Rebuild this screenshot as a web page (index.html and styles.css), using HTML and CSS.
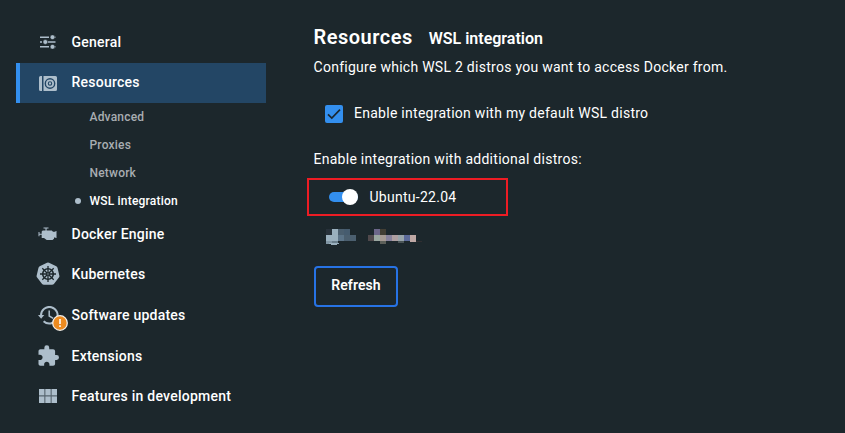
FILE: index.html
```html
<!DOCTYPE html>
<html lang="en">
<head>
<meta charset="utf-8">
<title>Settings</title>
<link rel="stylesheet" href="styles.css">
</head>
<body>
<div class="app">
  <nav class="sidebar">
    <a class="item first"><span class="icon"><svg width="16" height="14" viewBox="0 0 16 14"><g stroke="#adbecb" stroke-width="1.5"><path d="M0 2.2h9M11 2.2h4.5M0 7h2M4 7h11.5M0 11.8h9M11 11.8h4.5"/></g><g fill="#adbecb" stroke="#1c272c" stroke-width=".6"><circle cx="12.5" cy="2.2" r="2.4"/><circle cx="5.3" cy="7" r="2.4"/><circle cx="12.5" cy="11.8" r="2.4"/></g></svg></span><span class="label">General</span></a>
    <a class="item active"><span class="icon"><svg width="18" height="15" viewBox="0 0 18 15"><path fill="#adbecb" d="M1.500 0H3v15H1.500Q0 15 0 13.500v-12Q0 0 1.500 0zM4.500 0h12Q18 0 18 1.500v12q0 1.500-1.500 1.500h-12z"/><circle cx="11" cy="7.500" r="4.700" fill="none" stroke="#234665" stroke-width="1.400"/><circle cx="11" cy="7.500" r="1.700" fill="none" stroke="#234665" stroke-width="1.100"/></svg></span><span class="label">Resources</span></a>
    <div class="subnav">
      <a class="sub">Advanced</a>
      <a class="sub">Proxies</a>
      <a class="sub">Network</a>
      <a class="sub current">WSL integration</a>
    </div>
    <a class="item engine"><span class="icon"><svg width="20" height="16" viewBox="0 0 20 16"><path fill="#adbecb" d="M5.500 1.500h5v1.100H8.600v2h5.200l1.200 1.200h2.500V5h1v7h-1v-.6H16v1.400L14.500 14H8.700L6 12H3.700V8.700H1.500v1.600h-1V6h1v1.700h2.200V5.400l1-.8h2.800v-2h-2z"/></svg></span><span class="label">Docker Engine</span></a>
    <a class="item"><span class="icon"><svg width="24" height="24" viewBox="0 0 24 24"><path fill="#adbecb" d="M11 .8q1-.5 2 0l7.300 3.500q.9.500 1.200 1.500l1.900 7.900q.2 1-.5 1.900l-5 6.400q-.7.800-1.800.8H7.900q-1.100 0-1.800-.8l-5-6.400q-.7-.9-.5-1.900l1.900-7.900q.3-1 1.200-1.500z"/><g fill="none" stroke="#1c272c" stroke-width="1.600"><circle cx="12" cy="12" r="5.300"/><path d="M12 4v16M4 12h16M6.300 6.300l11.400 11.400M17.700 6.300 6.300 17.700" stroke-width="1.300"/></g><circle cx="12" cy="12" r="1.200" fill="#adbecb" stroke="#1c272c"/></svg></span><span class="label">Kubernetes</span></a>
    <a class="item updates"><span class="icon update"><svg width="21" height="19" viewBox="0 0 21 19"><path fill="none" stroke="#adbecb" stroke-width="2" d="M3 10.500V9.300a8.300 8.300 0 1 1 2.600 6"/><path fill="#adbecb" d="M0 9h6.300L3.100 12.800z"/><path fill="none" stroke="#adbecb" stroke-width="1.500" d="M11.200 4.500V10l4 2.400"/></svg><svg class="badge" width="16" height="16" viewBox="0 0 16 16"><circle cx="8" cy="8" r="7.300" fill="#ed8b20" stroke="#f3eee8" stroke-width="1.300"/><path d="M8 4v5M8 10.300v1.600" stroke="#fff" stroke-width="1.600"/></svg></span><span class="label">Software updates</span></a>
    <a class="item"><span class="icon"><svg width="21" height="21" viewBox="1.500 1 21.500 21"><path fill="#adbecb" d="M20.500 11H19V7c0-1.100-.9-2-2-2h-4V3.500a2.500 2.500 0 0 0-5 0V5H4c-1.100 0-1.990.9-1.990 2v3.800H3.500c1.490 0 2.700 1.210 2.700 2.700s-1.210 2.700-2.700 2.700H2V20c0 1.100.9 2 2 2h3.800v-1.500c0-1.490 1.210-2.700 2.700-2.700s2.700 1.210 2.700 2.700V22H17c1.100 0 2-.9 2-2v-4h1.500a2.500 2.500 0 0 0 0-5z"/></svg></span><span class="label">Extensions</span></a>
    <a class="item"><span class="icon"><svg width="18" height="14" viewBox="0 0 18 14"><path fill="#56646e" d="M0 0h18v14H0z"/><path fill="#adbecb" d="M0 0h5.300v6.300H0zM6.400 0h5.200v6.300H6.400zM12.700 0H18v6.300h-5.300zM0 7.600h5.300V14H0zM6.400 7.600h5.200V14H6.400zM12.700 7.600H18V14h-5.300z"/></svg></span><span class="label">Features in development</span></a>
  </nav>
  <main class="content">
    <header class="heading"><h1>Resources</h1><h2>WSL integration</h2></header>
    <p class="intro">Configure which WSL 2 distros you want to access Docker from.</p>
    <label class="check"><svg width="18" height="18" viewBox="0 0 18 18"><rect width="18" height="18" rx="2" fill="#338fef"/><path d="M3 9.300 6.800 13 15 4.700" fill="none" stroke="#1b2730" stroke-width="1.700"/></svg><span class="check-text">Enable integration with my default WSL distro</span></label>
    <p class="more">Enable integration with additional distros:</p>
    <div class="distro"><span class="switch"><span class="knob"></span></span><span>Ubuntu-22.04</span></div>
    <svg class="masked" width="96" height="17" viewBox="0 0 96 17" shape-rendering="crispEdges">
      <path fill="#27313a" d="M0 0h6v6H0z"/><path fill="#9ab0be" d="M6 0h6v12H0V6h6z"/><path fill="#4b5f6f" d="M12 0h6v6h-6zM18 6h12v6H18z"/><path fill="#465c6f" d="M18 0h6v6h-6z"/><path fill="#5c7488" d="M12 6h6v6h-6z"/><path fill="#8095a3" d="M0 12h6v3H0z"/><path fill="#687d8b" d="M6 12h6v3H6z"/><path fill="#9ab0be" d="M3 14h10v1H3zM5 15h6v1H5z"/>
      <path fill="#50494c" d="M42 6h6v6h-6z"/><path fill="#6b6689" d="M48 0h6v6h-6z"/><path fill="#423e34" d="M54 0h6v6h-6z"/><path fill="#9aa7a1" d="M48 6h6v6h-6z"/><path fill="#a69b94" d="M54 6h6v6h-6z"/><path fill="#87829c" d="M60 6h6v6h-6z"/><path fill="#ad9fa1" d="M66 6h6v6h-6z"/><path fill="#98a5ab" d="M72 6h6v6h-6z"/><path fill="#5c6b9a" d="M78 6h6v6h-6z"/><path fill="#bea8a5" d="M84 6h6v7h-6z"/><path fill="#5d605a" d="M54 12h6v3h-6z"/><path fill="#4b5557" d="M72 12h6v2h-6z"/><path fill="#302e31" d="M90 12h6v1h-6z"/>
    </svg>
    <button class="refresh">Refresh</button>
  </main>
</div>
</body>
</html>
```
FILE: styles.css
```css
* { box-sizing: border-box; }
body { margin: 0; background: #1c272c; color: #fff; font-family: Roboto, "Liberation Sans", sans-serif; font-size: 14px; }
h1, h2, p { margin: 0; }
.app { display: flex; height: 433px; overflow: hidden; }
.sidebar { width: 266px; padding: 22px 0 0 16px; }
.item { display: flex; align-items: center; height: 40.5px; font-weight: 500; letter-spacing: .24px; line-height: 20px; }
.item.first { margin-bottom: .5px; }
.item.active { height: 40px; background: #234665; box-shadow: inset 4px 0 #338fef; }
.item.active .label { padding-bottom: 2px; }
.item.engine { height: 40px; }
.item.updates { height: 41px; }
.icon { display: flex; justify-content: center; align-items: center; width: 40px; height: 24px; margin: 0 3.5px 0 12px; }
.icon svg { display: block; }
.update { position: relative; }
.badge { position: absolute; left: 24px; top: 12px; }
.subnav { height: 111px; }
.sub { display: flex; align-items: center; height: 28px; padding-left: 73.5px; color: #a8adb1; font-size: 12px; font-weight: 500; letter-spacing: .2px; }
.current { padding-left: 59px; color: #fff; }
.current::before { content: ""; width: 6px; height: 6px; margin-right: 8.5px; border-radius: 50%; background: #adbecb; }
.content { display: flex; flex-direction: column; align-items: flex-start; padding: 25px 0 0 47.5px; letter-spacing: .27px; }
.heading { display: flex; align-items: baseline; gap: 16px; height: 24px; line-height: 24px; }
h1 { font-size: 20px; font-weight: 600; letter-spacing: .5px; }
h2 { font-size: 16px; font-weight: 600; letter-spacing: 0; }
.intro { margin-top: 8px; line-height: 20px; }
.check { display: flex; align-items: center; gap: 11px; height: 20px; margin: 27px 0 0 11.5px; }
.check-text { padding-bottom: 2px; }
.more { margin-top: 25px; line-height: 20px; }
.distro { display: flex; align-items: center; gap: 11.5px; width: 201px; height: 38px; margin: 9px 0 0 -6.5px; padding-left: 20px; border: 2px solid #ed1c24; }
.switch { display: flex; align-items: center; justify-content: flex-end; width: 29px; height: 10px; border-radius: 5px; background: #338fef; }
.knob { width: 16px; height: 16px; border-radius: 50%; background: #fff; }
.masked { margin: 13px 0 0 12.5px; }
.refresh { width: 84px; height: 41px; margin: 20px 0 0 .5px; padding: 0 0 3px; border: 2px solid #2773e5; border-radius: 4px; background: transparent; color: #fff; font: 600 14px Roboto, sans-serif; letter-spacing: .1px; }
```
